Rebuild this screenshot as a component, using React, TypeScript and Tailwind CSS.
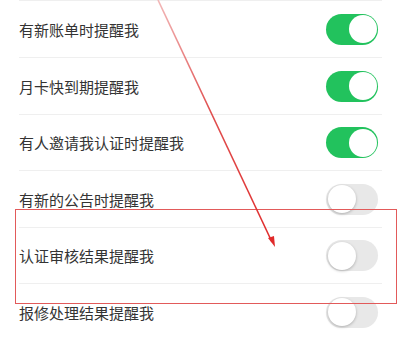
import React from "react";

const rows = [
  { label: "有新账单时提醒我", on: true, h: "h-[57px]" },
  { label: "月卡快到期提醒我", on: true, h: "h-[57px]" },
  { label: "有人邀请我认证时提醒我", on: true, h: "h-[56px]" },
  { label: "有新的公告时提醒我", on: false, h: "h-[57px]" },
  { label: "认证审核结果提醒我", on: false, h: "h-[56px]" },
  { label: "报修处理结果提醒我", on: false, h: "h-[57px]" },
];

function Toggle({ on }: { on: boolean }) {
  return on ? (
    <div className="w-[52px] h-[31px] rounded-full bg-[#22c25d] flex items-center justify-end p-[1.5px]">
      <div className="w-[28px] h-[28px] rounded-full bg-white" />
    </div>
  ) : (
    <div className="w-[52px] h-[31px] rounded-full bg-[#e8e8e8] flex items-center justify-start p-[1.5px]">
      <div className="w-[28px] h-[28px] rounded-full bg-white shadow-[0_1px_3px_rgba(0,0,0,0.25)]" />
    </div>
  );
}

export default function App() {
  return (
    <div
      className="relative w-[400px] h-[340px] overflow-hidden bg-white"
      style={{ fontFamily: '"Noto Sans CJK SC", "Noto Sans", sans-serif' }}
    >
      <div className="ml-[19px] mr-[18px] border-t border-[#efefef]" />
      <div className="flex flex-col">
        {rows.map((r, i) => (
          <div key={i} className={`${r.h} flex flex-col`}>
            <div className="flex-1 flex items-center justify-between pl-[19px] pr-[22px]">
              <span className="text-[15px] text-[#333333] pt-[2px]">{r.label}</span>
              <Toggle on={r.on} />
            </div>
            <div className="ml-[19px] mr-[18px] border-t border-[#efefef]" />
          </div>
        ))}
      </div>

      <div className="absolute left-[15px] top-[209px] w-[382px] h-[95px] border-[1.5px] border-[#e25a5a]" />

      <svg className="absolute left-0 top-0" width="400" height="340" viewBox="0 0 400 340">
        <defs>
          <linearGradient id="lg" x1="158" y1="0" x2="274" y2="246" gradientUnits="userSpaceOnUse">
            <stop offset="0" stopColor="#f2b8b8" />
            <stop offset="0.45" stopColor="#e05050" />
            <stop offset="1" stopColor="#e02a2a" />
          </linearGradient>
        </defs>
        <line x1="158" y1="0" x2="272" y2="242" stroke="url(#lg)" strokeWidth="1.6" />
        <polygon points="275,247 268,238 274,236" fill="#e02a2a" />
      </svg>
    </div>
  );
}
